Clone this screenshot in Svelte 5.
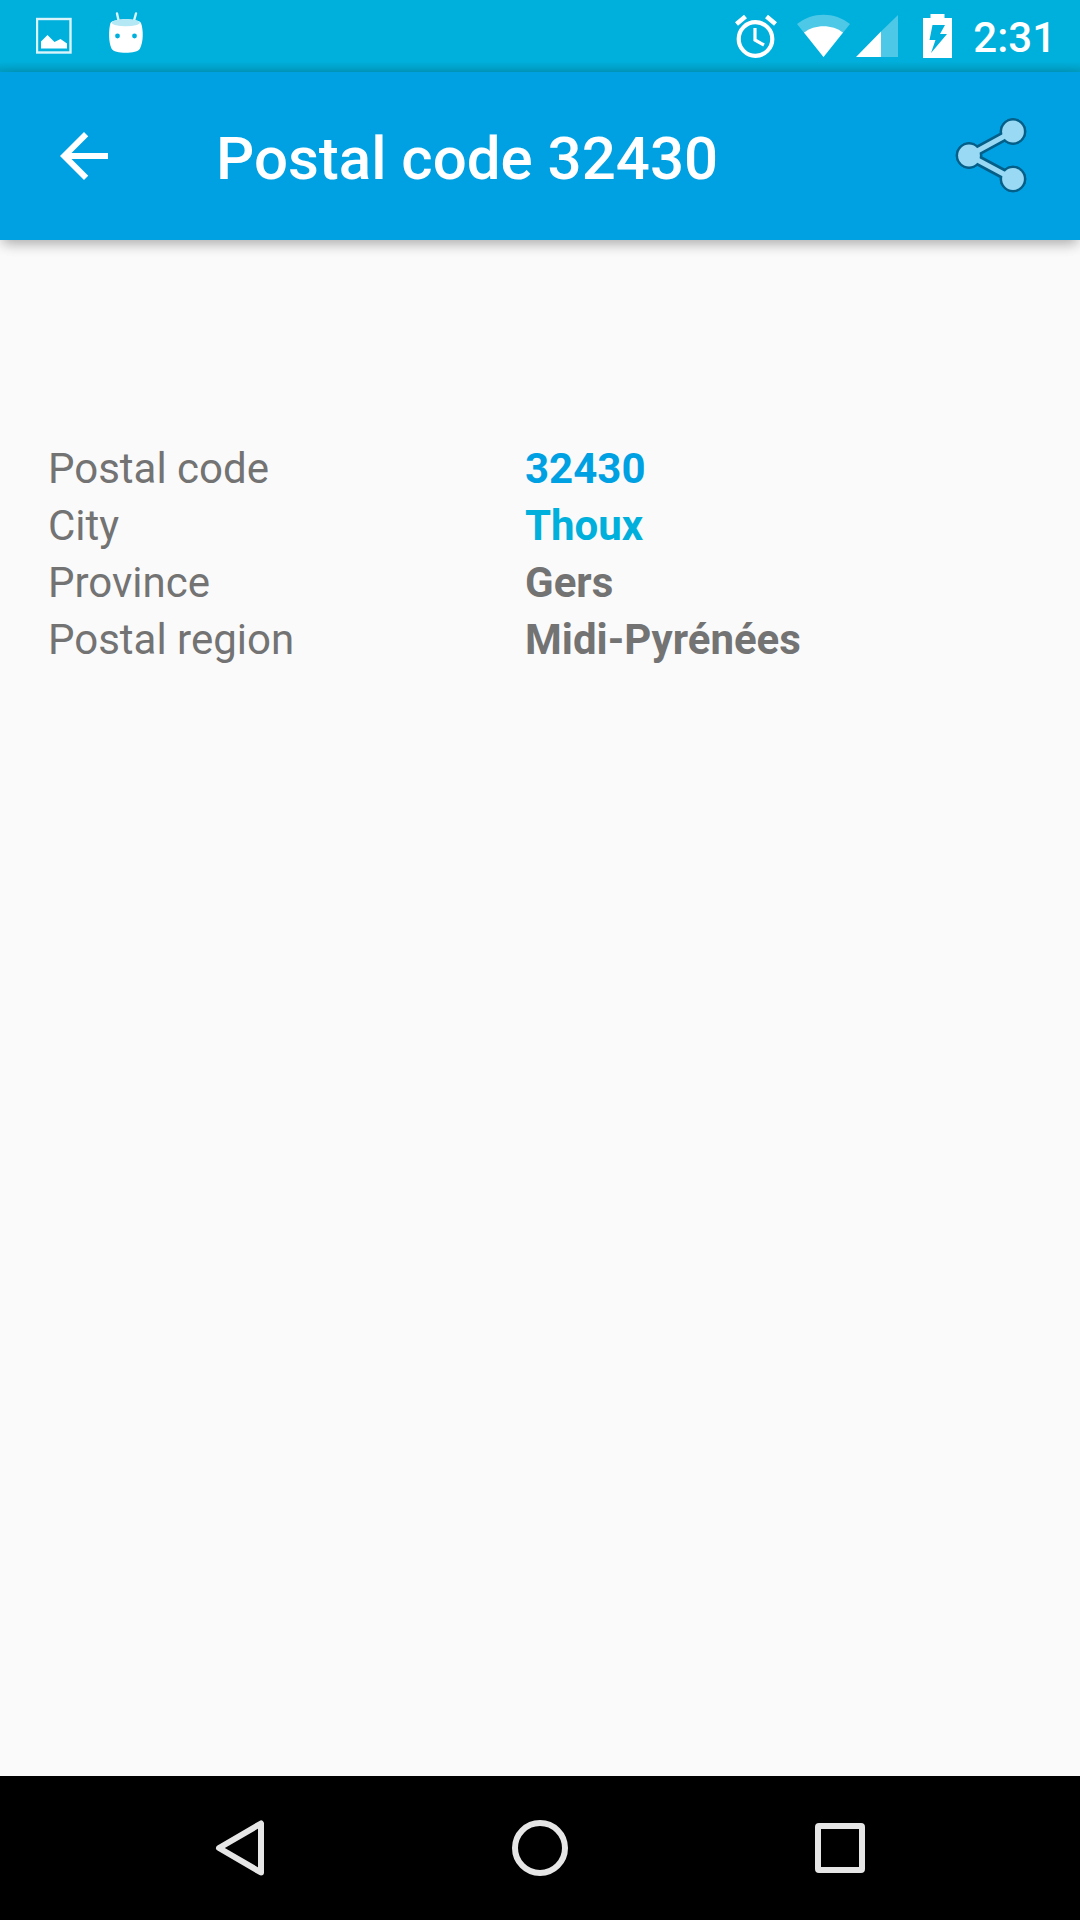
<script>
  const time = '2:31';
  const postalCode = '32430';
  const details = [
    { label: 'Postal code', value: postalCode, href: '#code', tone: 'blue' },
    { label: 'City', value: 'Thoux', href: '#city', tone: 'cyan' },
    { label: 'Province', value: 'Gers' },
    { label: 'Postal region', value: 'Midi-Pyrénées' }
  ];
</script>

<div class="screen">
  <div class="status">
    <div class="notifications">
      <svg width="36" height="72" viewBox="0 0 36 72" role="img" aria-label="Picture saved">
        <rect x="1" y="19" width="33.5" height="33.5" fill="none" stroke="#d9f5fb" stroke-width="2.4" />
        <path d="M5 48.5V41.5L11.5 35L18.5 42L24.5 39L31 43.5V48.5Z" fill="#fff" />
      </svg>
      <svg width="36" height="72" viewBox="0 0 36 72" role="img" aria-label="Android">
        <path d="M9 13.500L11 22.500M28 13.500L25.500 22.500" stroke="#d9f5fb" stroke-width="2.4" stroke-linecap="round" />
        <path d="M2.500 23C0.500 30 0.500 42 3.500 48.500C6 54.300 29.500 54.300 32 48.500C35.500 42 35.500 30 33 23C30 18 6 18 2.500 23Z" fill="#fff" />
        <ellipse cx="17.800" cy="22.700" rx="14" ry="3.500" fill="#b3e8f4" />
        <circle cx="9.500" cy="36" r="2.400" fill="#00b0dc" />
        <circle cx="26.500" cy="36" r="2.400" fill="#00b0dc" />
      </svg>
    </div>
    <div class="system">
      <svg class="alarm" width="42" height="72" viewBox="0 0 42 72" role="img" aria-label="Alarm set">
        <circle cx="20.500" cy="39" r="16.800" fill="none" stroke="#fff" stroke-width="4.200" />
        <path d="M20 28V40L29 45" fill="none" stroke="#fff" stroke-width="3.200" />
        <path d="M1.500 24L10.500 16.500M31.500 16.500L40.500 24" stroke="#fff" stroke-width="4.600" />
      </svg>
      <svg class="wifi" width="54" height="72" viewBox="0 0 54 72" role="img" aria-label="Wi-Fi">
        <path d="M26.500 57L0 24C15 11.500 38 11.500 53 24Z" fill="#fff" fill-opacity=".3" />
        <path d="M26.500 57L7 32.500C17.500 24 35.500 24 46 32.500Z" fill="#fff" />
      </svg>
      <svg class="signal" width="42" height="72" viewBox="0 0 42 72" role="img" aria-label="Mobile signal">
        <path d="M25 57V31.500L42 15V57Z" fill="#fff" fill-opacity=".3" />
        <path d="M0 57L25 31.500V57Z" fill="#fff" />
      </svg>
      <svg class="battery" width="29" height="72" viewBox="0 0 29 72" role="img" aria-label="Battery charging">
        <path fill-rule="evenodd" d="M7.500 14H21.500V18H29V58H0V18H7.500ZM9.500 25L6.500 40H12.500L8 53L24 34H17L22 25Z" fill="#fff" />
      </svg>
      <time>{time}</time>
    </div>
  </div>

  <header class="appbar">
    <button class="back" type="button" aria-label="Back">
      <svg width="72" height="72" viewBox="0 0 24 24">
        <path d="M20 11H7.830l5.590-5.590L12 4l-8 8 8 8 1.410-1.410L7.830 13H20v-2z" fill="#fff" />
      </svg>
    </button>
    <h1>Postal code {postalCode}</h1>
    <button class="share" type="button" aria-label="Share">
      <svg width="96" height="96" viewBox="0 0 96 96">
        <g fill="#045f88" stroke="#045f88">
          <path d="M65 23.500L21 47.500L65 71" fill="none" stroke-width="10.500" />
          <circle cx="21" cy="47.500" r="13" />
          <circle cx="65" cy="23.500" r="13" />
          <circle cx="65" cy="71" r="13" />
        </g>
        <g fill="#99d9f4" stroke="none">
          <path d="M65 23.500L21 47.500L65 71" fill="none" stroke="#99d9f4" stroke-width="5" />
          <circle cx="21" cy="47.500" r="10.900" />
          <circle cx="65" cy="23.500" r="10.900" />
          <circle cx="65" cy="71" r="10.900" />
        </g>
      </svg>
    </button>
  </header>

  <main>
    <dl>
      {#each details as item}
        <div class="row">
          <dt>{item.label}</dt>
          <dd>
            {#if item.href}
              <a class={item.tone} href={item.href}>{item.value}</a>
            {:else}
              {item.value}
            {/if}
          </dd>
        </div>
      {/each}
    </dl>
  </main>

  <nav aria-label="System navigation">
    <button type="button" aria-label="Back">
      <svg width="60" height="60" viewBox="0 0 60 60">
        <path d="M9 30L51 5.500V54.500Z" />
      </svg>
    </button>
    <button type="button" aria-label="Home">
      <svg width="60" height="60" viewBox="0 0 60 60">
        <circle cx="30" cy="30" r="25" />
      </svg>
    </button>
    <button type="button" aria-label="Recent apps">
      <svg width="60" height="60" viewBox="0 0 60 60">
        <rect x="8" y="8" width="44" height="44" rx="1" />
      </svg>
    </button>
  </nav>
</div>

<style>
  :global(body) {
    margin: 0;
    background: #fafafa;
  }

  .screen {
    display: flex;
    flex-direction: column;
    min-height: 100vh;
    overflow: hidden;
    background: #fafafa;
    color: #737373;
    font-family: Roboto, 'Liberation Sans', sans-serif;
  }

  svg {
    display: block;
    flex: none;
  }

  button {
    display: flex;
    align-items: center;
    justify-content: center;
    margin: 0;
    padding: 0;
    border: 0;
    background: none;
    cursor: pointer;
  }

  .status {
    display: flex;
    justify-content: space-between;
    padding: 0 24px 0 36px;
    background: linear-gradient(to top, #009fc4, #00b0dc 10px);
    color: #fff;
  }

  .notifications {
    display: flex;
    gap: 36px;
  }

  .system {
    display: flex;
  }

  .alarm {
    margin-right: 20px;
  }

  .wifi {
    margin-right: 5px;
  }

  .signal {
    margin-right: 25px;
  }

  .battery {
    margin-right: 21px;
  }

  time {
    padding-top: 4px;
    font-size: 42px;
    font-weight: 500;
    line-height: 68px;
  }

  .appbar {
    position: relative;
    display: flex;
    align-items: center;
    padding: 36px 36px 36px 48px;
    background: #00a1e3;
    box-shadow:
      0 8px 12px -4px rgba(0, 0, 0, 0.2),
      0 2px 14px rgba(0, 0, 0, 0.16);
  }

  h1 {
    flex: 1;
    margin: 0;
    padding: 6px 0 0 96px;
    color: #fff;
    font-size: 60px;
    font-weight: 500;
    line-height: 72px;
  }

  main {
    flex: 1;
    padding: 200px 48px 48px;
  }

  dl {
    margin: 0;
    font-size: 42px;
    line-height: 57px;
  }

  .row {
    display: grid;
    grid-template-columns: 477fr 507fr;
  }

  dd {
    margin: 0;
    font-weight: 700;
  }

  a {
    text-decoration: none;
  }

  .blue {
    color: #00a1e3;
  }

  .cyan {
    color: #00b0dc;
  }

  nav {
    display: grid;
    grid-template-columns: repeat(3, 1fr);
    padding: 0 90px;
    background: #000;
  }

  nav button {
    height: 144px;
  }

  nav svg {
    fill: none;
    stroke: #e6e6e6;
    stroke-width: 6px;
    stroke-linejoin: round;
  }
</style>
